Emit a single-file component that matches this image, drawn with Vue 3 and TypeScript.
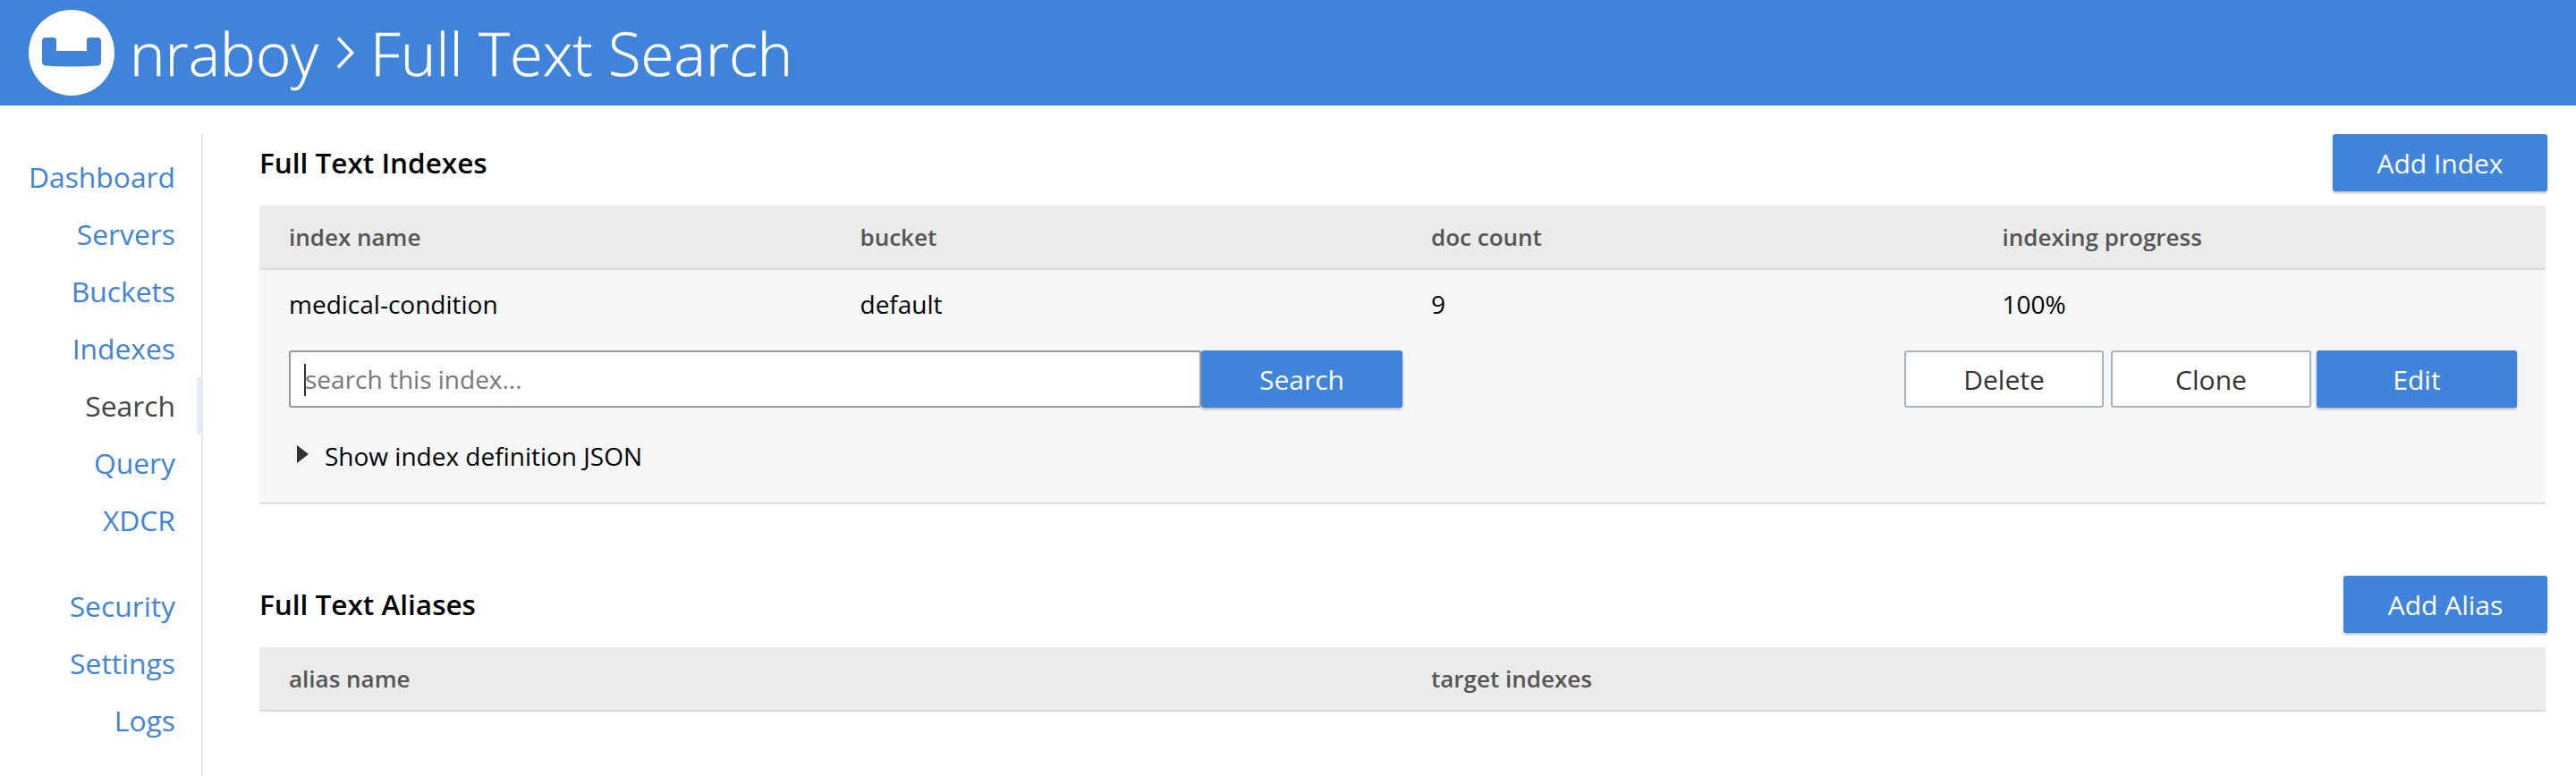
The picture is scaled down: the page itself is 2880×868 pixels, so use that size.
<script setup lang="ts">
interface NavItem { label: string; active?: boolean }
const navTop: NavItem[] = [
  { label: 'Dashboard' },
  { label: 'Servers' },
  { label: 'Buckets' },
  { label: 'Indexes' },
  { label: 'Search', active: true },
  { label: 'Query' },
  { label: 'XDCR' },
]
const navBottom: NavItem[] = [{ label: 'Security' }, { label: 'Settings' }, { label: 'Logs' }]
const indexCols = ['index name', 'bucket', 'doc count', 'indexing progress']
const indexRow = ['medical-condition', 'default', '9', '100%']
const aliasCols = ['alias name', 'target indexes']
</script>

<template>
  <div class="page">
    <header class="topbar">
      <svg class="logo" viewBox="0 0 96 96" width="96" height="96" aria-hidden="true">
        <circle cx="48" cy="48" r="48" fill="#fff" />
        <path
          d="M19 31H28Q31 31 31 34V46H65V34Q65 31 68 31H77Q81 31 81 35V58Q81 62 77 62.5Q48 64.5 19 62.5Q15 62 15 58V35Q15 31 19 31Z"
          fill="#3f84da"
        />
      </svg>
      <span class="crumb">nraboy</span>
      <svg class="chev" viewBox="0 0 20 36" width="20" height="36" aria-hidden="true">
        <path d="M2 1.5L17.5 18L2 34.5" fill="none" stroke="#fff" stroke-width="3.6" />
      </svg>
      <span class="crumb">Full Text Search</span>
    </header>

    <div class="main">
      <nav class="sidebar">
        <ul class="nav">
          <li v-for="n in navTop" :key="n.label" :class="{ active: n.active }">{{ n.label }}</li>
        </ul>
        <ul class="nav nav-second">
          <li v-for="n in navBottom" :key="n.label">{{ n.label }}</li>
        </ul>
      </nav>

      <main class="content">
        <section class="sec-indexes">
          <div class="sec-head">
            <h2>Full Text Indexes</h2>
            <button class="btn primary add-index">Add Index</button>
          </div>
          <div class="table">
            <div class="thead cols4">
              <div v-for="c in indexCols" :key="c">{{ c }}</div>
            </div>
            <div class="tbody">
              <div class="row cols4">
                <div v-for="c in indexRow" :key="c">{{ c }}</div>
              </div>
              <div class="actions">
                <div class="search-group">
                  <div class="input-wrap">
                    <input class="search" type="text" placeholder="search this index..." />
                    <span class="caret"></span>
                  </div>
                  <button class="btn primary search-btn">Search</button>
                </div>
                <div class="btn-group">
                  <button class="btn outline delete">Delete</button>
                  <button class="btn outline">Clone</button>
                  <button class="btn primary edit">Edit</button>
                </div>
              </div>
              <div class="disclosure">
                <span class="tri"></span>
                <span>Show index definition JSON</span>
              </div>
            </div>
          </div>
        </section>

        <section class="sec-aliases">
          <div class="sec-head">
            <h2>Full Text Aliases</h2>
            <button class="btn primary add-alias">Add Alias</button>
          </div>
          <div class="table">
            <div class="thead cols2">
              <div v-for="c in aliasCols" :key="c">{{ c }}</div>
            </div>
          </div>
        </section>
      </main>
    </div>
  </div>
</template>

<style>
html, body { margin: 0; background: #fff; }
</style>

<style scoped>
.page {
  width: 2880px;
  height: 868px;
  overflow: hidden;
  font-family: "Open Sans", "Noto Sans", sans-serif;
  color: #000;
  background: #fff;
}
.topbar {
  height: 118px;
  background: #3f84da;
  display: flex;
  align-items: center;
  padding-left: 32px;
  color: #fff;
}
.logo { margin-right: 17px; flex: none; }
.crumb { font-size: 67px; font-weight: 300; line-height: 118px; -webkit-text-stroke: 0.5px #fff; }
.chev { margin: 0 18px 0 20px; flex: none; }
.main { display: flex; padding-top: 32px; height: 718px; }
.sidebar {
  width: 225px;
  flex: none;
  border-right: 2px solid #e9e9e9;
  padding-top: 16px;
}
.nav { list-style: none; margin: 0; padding: 0; }
.nav li {
  height: 64px;
  line-height: 64px;
  text-align: right;
  padding-right: 29px;
  font-size: 31.8px;
  font-weight: 400;
  color: #3f84da;
  position: relative;
}
.nav li.active { color: #444; }
.nav li.active::after {
  content: "";
  position: absolute;
  right: 0;
  top: 0;
  bottom: 0;
  width: 5px;
  background: #e2ebf7;
}
.nav-second { margin-top: 32px; }
.content { margin-left: 63px; width: 2558px; flex: none; }
.sec-head {
  height: 64px;
  display: flex;
  justify-content: space-between;
  align-items: flex-start;
}
h2 { margin: 0; font-size: 31.5px; font-weight: 600; line-height: 64px; color: #000; }
.table { width: 2556px; margin-top: 16px; }
.thead {
  height: 70px;
  background: #ebebeb;
  border-bottom: 2px solid #dcdcdc;
  padding-left: 33px;
  font-size: 26px;
  font-weight: 600;
  color: #555;
  line-height: 70px;
}
.cols4 { display: grid; grid-template-columns: repeat(4, 638.5px); }
.cols2 { display: grid; grid-template-columns: repeat(2, 1277px); }
.tbody {
  height: 260px;
  background: #f5f6f8;
  border-bottom: 2px solid #dcdcdc;
  padding: 0 32px 0 33px;
}
.row { height: 76px; align-items: center; font-size: 28px; color: #000; margin-bottom: 14px; }
.actions { display: flex; justify-content: space-between; }
.search-group { display: flex; }
.input-wrap { position: relative; }
.search {
  display: block;
  box-sizing: border-box;
  width: 1020px;
  height: 64px;
  border: 2px solid #999;
  border-radius: 3px;
  background: #fff;
  padding: 0 16px;
  font: 400 28px "Open Sans", sans-serif;
  outline: none;
}
.search::placeholder { color: #777; opacity: 1; }
.caret {
  position: absolute;
  left: 17px;
  top: 15px;
  width: 2px;
  height: 36px;
  background: #333;
}
.btn {
  height: 64px;
  box-sizing: border-box;
  border-radius: 3px;
  font-family: inherit;
  font-size: 30px;
  font-weight: 400;
  padding: 0;
  cursor: pointer;
}
.primary {
  background: #3f84da;
  color: #fff;
  border: none;
  box-shadow: 0 2px 3px rgba(0, 0, 0, 0.25);
}
.outline {
  background: #fff;
  color: #333;
  border: 2px solid #a6b3c2;
  width: 224px;
}
.outline.delete { width: 223px; margin-right: 2px; }
.add-index { width: 240px; }
.add-alias { width: 228px; }
.search-btn { width: 225px; }
.edit { width: 224px; }
.btn-group { display: flex; gap: 6px; }
.disclosure {
  display: flex;
  align-items: center;
  margin-top: 34px;
  font-size: 28px;
  line-height: 40px;
  color: #000;
  padding-left: 9px;
}
.tri {
  width: 0;
  height: 0;
  border-left: 13px solid #333;
  border-top: 10px solid transparent;
  border-bottom: 10px solid transparent;
  margin-right: 18px;
  margin-top: -4px;
}
.sec-aliases { margin-top: 80px; }
</style>
